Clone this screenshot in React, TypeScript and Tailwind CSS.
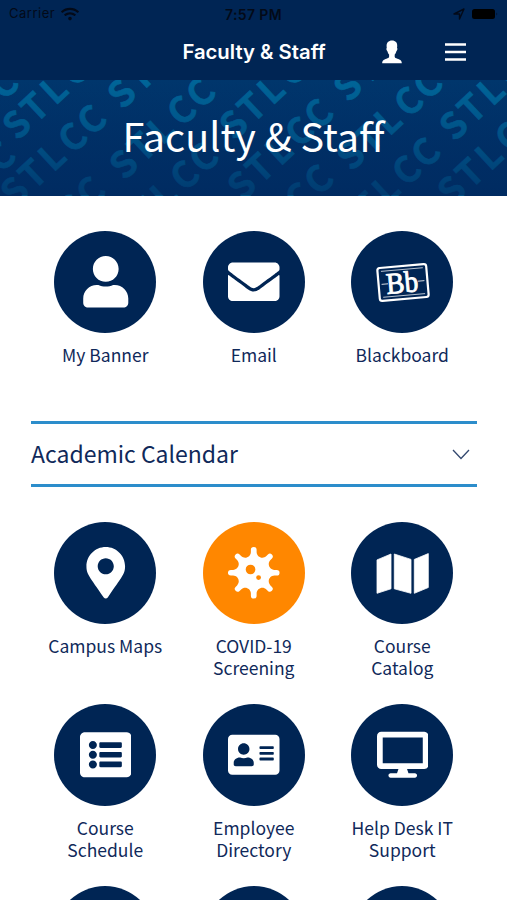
import { FaUser, FaEnvelope, FaMapMarkerAlt, FaVirus, FaListAlt, FaAddressCard, FaDesktop, FaWifi } from "react-icons/fa"

// centre of the S that starts each word on the banner
const words = [
  [18, 126], [-72, 157], [-75, 230], [16, 193], [123, 95], [125, 166], [15, 265], [128, 231],
  [235, 126], [243, 187], [349, 88], [352, 157], [243, 253], [350, 226], [455, 127], [453, 192],
]

function Pattern() {
  return (
    <svg className="absolute inset-0 h-full w-full" viewBox="0 80 507 116" preserveAspectRatio="none">
      <defs>
        <linearGradient id="fade" x1="0" y1="0" x2="0" y2="1">
          <stop offset="0" stopColor="#00316a" stopOpacity="0" />
          <stop offset="1" stopColor="#002c62" stopOpacity="0.75" />
        </linearGradient>
      </defs>
      {words.map(([x, y], i) => (
        <text
          key={i}
          x="0 25 51 79 105"
          y="11"
          transform={`translate(${x} ${y}) rotate(-43)`}
          textAnchor="middle"
          fontSize="36"
          fontWeight="700"
          fill="#006598"
          stroke="#006598"
          strokeWidth="0.6"
        >
          STLCC
        </text>
      ))}
      <rect x="0" y="80" width="507" height="116" fill="url(#fade)" />
    </svg>
  )
}

function Blackboard() {
  return (
    <svg width="102" height="102" viewBox="0 0 102 102" fill="none" stroke="white">
      <g transform="rotate(-5 52 51.5)">
        <rect x="27.5" y="35" width="49" height="33" rx="2.5" strokeWidth="2.2" />
        <path d="M31 38.5H73M31 64.5H73" strokeWidth="0.7" />
        <path d="M30.5 51.5H37M67 51.5H73.5" strokeWidth="0.8" />
        <text x="35" y="61.5" fontSize="30" textLength="32" lengthAdjust="spacingAndGlyphs" fill="white" strokeWidth="0.9" className="font-['Liberation_Serif',serif]">Bb</text>
      </g>
    </svg>
  )
}

function FoldedMap() {
  return (
    <svg width="102" height="102" viewBox="0 0 102 102" fill="white" stroke="white" strokeWidth="0.8" strokeLinejoin="round">
      <path d="M26 37.9L40 32V66.8L26 71.3Z" />
      <path d="M43.3 32L60 37.4V71.3L43.3 66.8Z" />
      <path d="M63.3 37.4L77.3 31.6V65.5L63.3 71.3Z" />
    </svg>
  )
}

function Tile({ icon, label, orange }: { icon?: React.ReactNode; label?: string; orange?: boolean }) {
  return (
    <a href="#" className="flex flex-col items-center">
      <span className={`flex size-[102px] shrink-0 items-center justify-center rounded-full text-[51.5px] text-white ${orange ? "bg-[#ff8700]" : "bg-[#002554]"}`}>
        {icon}
      </span>
      <span className="mt-[11px] h-11 whitespace-pre-line text-center text-[17.5px] leading-[22px]">{label}</span>
    </a>
  )
}

export default function App() {
  return (
    <main className="flex h-[900px] flex-col overflow-hidden bg-white font-['Noto_Sans_CJK_SC',sans-serif] text-[#10295a]">
      <header className="h-20 shrink-0 bg-[#002554] font-['Inter',sans-serif]">
        <div className="grid h-7 grid-cols-3 items-center px-[9px] text-[13px] text-[#030a18]">
          <div className="flex items-center gap-1.5">
            <span className="tracking-[0.5px]">Carrier</span>
            <FaWifi className="text-[18px]" />
          </div>
          <div className="text-center text-[14px] font-semibold tracking-[0.4px]">7:57 PM</div>
          <div className="flex items-center justify-end gap-1">
            <svg width="12" height="12" viewBox="0 0 12 12" fill="none" stroke="currentColor" strokeWidth="1.4" strokeLinejoin="round">
              <path d="M1 6L11 1L6.5 11V6Z" />
            </svg>
            <svg width="29" height="12" viewBox="0 0 29 12">
              <rect x="3" y="1" width="23" height="10" rx="2.5" fill="black" />
              <path d="M27.5 4.5q1.5 1.5 0 3z" fill="currentColor" />
            </svg>
          </div>
        </div>
        <div className="grid h-12 grid-cols-[1fr_auto_1fr] items-center pl-px text-white">
          <span />
          <h1 className="text-[20.3px] font-semibold">Faculty &amp; Staff</h1>
          <div className="flex items-center justify-end gap-[43px] pr-[41px]">
            <svg width="20" height="24" viewBox="0 0 20 24" fill="white">
              <path d="M10 .5C6.5.5 4.5 2.800 4.600 6c0 1 .1 1.700.2 2-.8.3-.5 2 .6 3.200.4 1.500 1 2.700 1.700 3.400v2.200c-.3 1-1 1.400-2.700 2C2 19.800.2 20.400.2 23.300h19.600c0-2.900-1.800-3.500-4.400-4.500-1.700-.6-2.400-1-2.700-2v-2.200c.7-.7 1.300-1.900 1.700-3.400 1.100-1.200 1.400-2.900.6-3.200.1-.3.200-1 .2-2C15.500 2.800 13.500.5 10 .5z" />
            </svg>
            <svg width="21" height="20" viewBox="0 0 21 20" stroke="white" strokeWidth="2.5">
              <path d="M0 2.5H21M0 10H21M0 17.5H21" />
            </svg>
          </div>
        </div>
      </header>

      <section className="relative flex h-[115.5px] shrink-0 items-center justify-center bg-linear-to-b from-[#00366c] to-[#002a60] pb-[6px]">
        <Pattern />
        <h2 className="relative text-[39.5px] font-normal leading-none text-white">Faculty &amp; Staff</h2>
      </section>

      <div className="shrink-0 pl-[31px] pr-[30.5px] pt-[35.5px]">
        <div className="grid grid-cols-3">
          <Tile icon={<FaUser />} label="My Banner" />
          <Tile icon={<FaEnvelope />} label="Email" />
          <Tile icon={<Blackboard />} label="Blackboard" />
        </div>

        <button className="mt-[33px] flex h-[66px] w-full items-center justify-between border-y-3 border-[#2c8dcb] pb-0.5 pr-[7px] text-[23px]">
          Academic Calendar
          <svg className="mt-0.5" width="18" height="11" viewBox="0 0 18 11" fill="none" stroke="#33486f" strokeWidth="1.3">
            <path d="M1 1L9 9.5L17 1" />
          </svg>
        </button>

        <div className="mt-[35px] grid grid-cols-3 gap-y-[25px]">
          <Tile icon={<FaMapMarkerAlt />} label="Campus Maps" />
          <Tile icon={<FaVirus />} label={"COVID-19\nScreening"} orange />
          <Tile icon={<FoldedMap />} label={"Course\nCatalog"} />
          <Tile icon={<FaListAlt />} label={"Course\nSchedule"} />
          <Tile icon={<FaAddressCard />} label={"Employee\nDirectory"} />
          <Tile icon={<FaDesktop />} label={"Help Desk IT\nSupport"} />
          <Tile />
          <Tile />
          <Tile />
        </div>
      </div>
    </main>
  )
}
